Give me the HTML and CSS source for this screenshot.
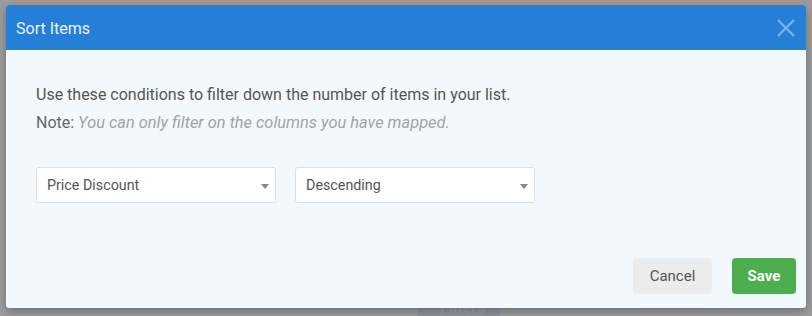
FILE: index.html
```html
<!DOCTYPE html>
<html lang="en">
<head>
  <meta charset="UTF-8" />
  <title>Sort Items</title>
  <link rel="stylesheet" href="styles.css">
</head>
<body>

  <!-- Page behind the overlay -->
  <div class="backdrop">
    <div class="backdrop-tab">Filters</div>
  </div>

  <!-- Modal -->
  <div class="modal">
    <div class="modal-header">
      <span class="modal-title">Sort Items</span>
      <button class="modal-close" type="button" aria-label="Close">
        <svg width="18" height="18" viewBox="0 0 18 18">
          <path d="M1 1 L17 17 M17 1 L1 17" stroke="currentColor" stroke-width="2.2" fill="none" />
        </svg>
      </button>
    </div>

    <div class="modal-body">
      <p class="intro">Use these conditions to filter down the number of items in your list.</p>
      <p class="note">Note: <em>You can only filter on the columns you have mapped.</em></p>

      <div class="select-row">
        <div class="select">
          <span>Price Discount</span>
          <span class="caret"></span>
        </div>
        <div class="select">
          <span>Descending</span>
          <span class="caret"></span>
        </div>
      </div>
    </div>

    <div class="modal-footer">
      <button class="btn btn-cancel" type="button">Cancel</button>
      <button class="btn btn-save" type="button">Save</button>
    </div>
  </div>

</body>
</html>
```

FILE: styles.css
```css
body {
  margin: 0;
  font-family: Roboto, 'Liberation Sans', sans-serif;
  background-color: #9c9c9c;
  width: 812px;
  height: 316px;
  overflow: hidden;
  position: relative;
}

/* Backdrop */
.backdrop {
  position: absolute;
  inset: 0;
}

.backdrop-tab {
  position: absolute;
  left: 418px;
  top: 300px;
  width: 82px;
  height: 16px;
  background: #8e939c;
  color: #9aa0a9;
  font-size: 16px;
  font-weight: bold;
  padding-left: 22px;
  box-sizing: border-box;
  line-height: 16px;
  overflow: hidden;
}

/* Modal */
.modal {
  position: absolute;
  left: 6px;
  top: 5px;
  width: 800px;
  height: 303px;
  background: #f3f8fc;
  border-radius: 3px;
  box-shadow: 0 3px 10px rgba(0, 0, 0, 0.3);
  display: flex;
  flex-direction: column;
  overflow: hidden;
}

.modal-header {
  background: #257fd6;
  height: 45px;
  display: flex;
  align-items: center;
  justify-content: space-between;
  padding: 0 10px 0 10px;
  flex-shrink: 0;
}

.modal-title {
  color: #eaf2fb;
  font-size: 16px;
  padding-top: 1px;
}

.modal-close {
  background: none;
  border: none;
  padding: 0;
  color: #7fb3e8;
  width: 20px;
  height: 20px;
  display: flex;
  align-items: center;
  justify-content: center;
  margin-top: 1px;
}

.modal-body {
  padding: 34px 30px 0;
  flex: 1;
}

.intro {
  margin: 0;
  color: #555;
  font-size: 16px;
  line-height: 22px;
}

.note {
  margin: 6px 0 0;
  color: #666;
  font-size: 16px;
  line-height: 22px;
}

.note em {
  color: #a3a3a3;
  font-size: 16.4px;
}

.select-row {
  display: flex;
  gap: 19px;
  margin-top: 33px;
}

.select {
  width: 240px;
  height: 36px;
  box-sizing: border-box;
  background: #fff;
  border: 1px solid #d9dfe6;
  border-radius: 3px;
  display: flex;
  align-items: center;
  justify-content: space-between;
  padding: 0 6px 0 10px;
  color: #555;
  font-size: 14.3px;
}

.caret {
  width: 0;
  height: 0;
  border-left: 4px solid transparent;
  border-right: 4px solid transparent;
  border-top: 5px solid #888;
  margin-top: 2px;
}

/* Footer */
.modal-footer {
  display: flex;
  justify-content: flex-end;
  gap: 20px;
  padding: 0 10px 14px;
}

.btn {
  height: 36px;
  border: none;
  border-radius: 4px;
  font-family: Roboto, 'Liberation Sans', sans-serif;
  font-size: 15px;
  cursor: pointer;
}

.btn-cancel {
  width: 79px;
  background: #ececec;
  color: #555;
}

.btn-save {
  width: 64px;
  background: #4cae4f;
  color: #fff;
  font-weight: bold;
}
```
